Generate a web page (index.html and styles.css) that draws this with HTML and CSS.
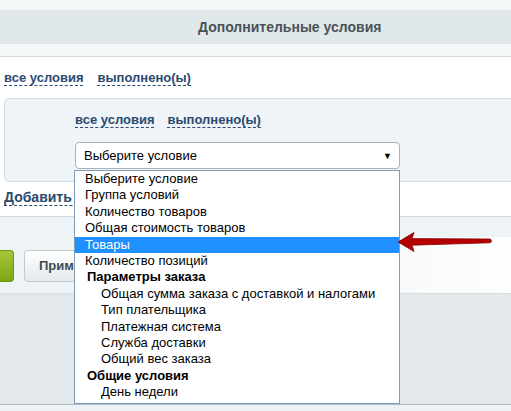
FILE: index.html
```html
<!DOCTYPE html>
<html lang="ru">
<head>
<meta charset="utf-8">
<title>Дополнительные условия</title>
<link rel="stylesheet" href="styles.css">
</head>
<body>
<div class="page">
  <div class="top-gap"></div>
  <div class="header"><span class="header-title">Дополнительные условия</span></div>
  <div class="sub-gap"></div>
  <div class="content">
    <div class="links outer-links">
      <span class="dash-link">все условия</span>
      <span class="dash-link">выполнено(ы)</span>
    </div>
    <div class="inner-box">
      <div class="links inner-links">
        <span class="dash-link">все условия</span>
        <span class="dash-link">выполнено(ы)</span>
      </div>
      <div class="select-box">
        <span class="select-text">Выберите условие</span>
        <span class="select-arrow">&#9660;</span>
      </div>
    </div>
    <div class="add-row"><span class="dash-link add-link">Добавить условие</span></div>
  </div>
  <div class="strip"></div>
  <div class="buttons">
    <div class="btn-green"></div>
    <div class="btn-apply">Применить</div>
  </div>
  <div class="desk"></div>
  <div class="bottom"></div>

  <ul class="dropdown">
    <li class="opt">Выберите условие</li>
    <li class="opt">Группа условий</li>
    <li class="opt">Количество товаров</li>
    <li class="opt">Общая стоимость товаров</li>
    <li class="opt selected">Товары</li>
    <li class="opt">Количество позиций</li>
    <li class="grp">Параметры заказа</li>
    <li class="opt sub">Общая сумма заказа с доставкой и налогами</li>
    <li class="opt sub">Тип плательщика</li>
    <li class="opt sub">Платежная система</li>
    <li class="opt sub">Служба доставки</li>
    <li class="opt sub">Общий вес заказа</li>
    <li class="grp">Общие условия</li>
    <li class="opt sub">День недели</li>
  </ul>

  <svg class="arrow" width="511" height="411" viewBox="0 0 511 411" xmlns="http://www.w3.org/2000/svg">
    <path d="M398 242 L414 232.5 L412 238.6 L489.5 239 A1.9 1.9 0 0 1 489.5 242.8 L412 245.2 L414 251.5 Z" fill="#b30000" stroke="#8a0000" stroke-width="0.8" stroke-linejoin="round"/>
  </svg>
</div>
</body>
</html>
```
FILE: styles.css
```css
* { box-sizing: border-box; }
html, body { margin: 0; padding: 0; }
body {
  background: #f5f8f9;
  font-family: "Liberation Sans", Arial, sans-serif;
  font-size: 13px;
  color: #000;
  width: 511px;
  height: 411px;
  overflow: hidden;
}
.page { position: relative; width: 511px; height: 411px; }
.top-gap { height: 10px; }
.header {
  height: 34px;
  background: #e1e8ea;
  line-height: 34px;
  padding-left: 198px;
  font-weight: bold;
  font-size: 14px;
  color: #4a5256;
}
.sub-gap { height: 13px; border-bottom: 1px solid #d2d9dc; }
.content {
  background: #fff;
  height: 160px;
  border-bottom: 1px solid #d2d9dc;
  padding-top: 13px;
}
.links { display: flex; gap: 14px; line-height: 15px; }
.outer-links { padding-left: 4px; }
.dash-link {
  color: #2b4a6f;
  font-weight: bold;
  border-bottom: 1px dashed #2b4a6f;
  padding-bottom: 0;
}
.inner-box {
  margin-top: 12px;
  margin-left: 4px;
  height: 84px;
  background: #eef4f7;
  border: 1px solid #d3dbdf;
  border-right: none;
  border-radius: 5px 0 0 5px;
  padding-top: 13px;
  padding-left: 70px;
}
.inner-links { gap: 13px; }
.select-box {
  margin-top: 14px;
  width: 325px;
  height: 27px;
  background: #fff;
  border: 1px solid #a8b3b8;
  border-radius: 4px;
  display: flex;
  align-items: center;
  justify-content: space-between;
  padding: 0 7px 0 8px;
}
.select-text { font-size: 13px; color: #000; }
.select-arrow { font-size: 9px; color: #000; }
.add-row {
  margin-left: 4px;
  margin-top: 8px;
  line-height: 15px;
  white-space: nowrap;
}
.add-link { font-size: 14px; }
.strip { height: 20px; background: #eef3f5; }
.buttons {
  height: 56px;
  background: linear-gradient(to right, #eef3f5 0%, #f3f6f7 60%, #fdfefe 100%);
  display: flex;
  align-items: flex-start;
  padding-top: 13px;
  gap: 10px;
}
.btn-green {
  width: 14px;
  height: 32px;
  background: linear-gradient(#a5c63a, #7ea516);
  border: 1px solid #6f9412;
  border-left: none;
  border-radius: 0 4px 4px 0;
}
.btn-apply {
  height: 32px;
  width: 120px;
  background: linear-gradient(#ffffff, #e4e9eb);
  border: 1px solid #c2cace;
  border-radius: 4px;
  line-height: 30px;
  padding-left: 14px;
  font-weight: bold;
  color: #3f4a4f;
}
.desk {
  height: 112px;
  background: #e3e9eb;
  border-top: 1px solid #d6dee1;
  border-bottom: 1px solid #aebcc4;
}
.bottom { height: 10px; background: #eef2f4; }

.dropdown {
  position: absolute;
  left: 74px;
  top: 170px;
  width: 326px;
  height: 234px;
  margin: 0;
  padding: 0 0 2px 0;
  list-style: none;
  background: #fff;
  border: 1px solid #7f9db9;
  font-size: 13px;
}
.dropdown li { height: 16.4px; line-height: 16.4px; white-space: nowrap; }
.opt { padding-left: 10px; color: #000; }
.opt.sub { padding-left: 26px; }
.grp { padding-left: 12px; font-weight: bold; color: #000; }
.opt.selected { background: #1e90ff; color: #fff; }
.arrow { position: absolute; left: 0; top: 0; pointer-events: none; }
```
